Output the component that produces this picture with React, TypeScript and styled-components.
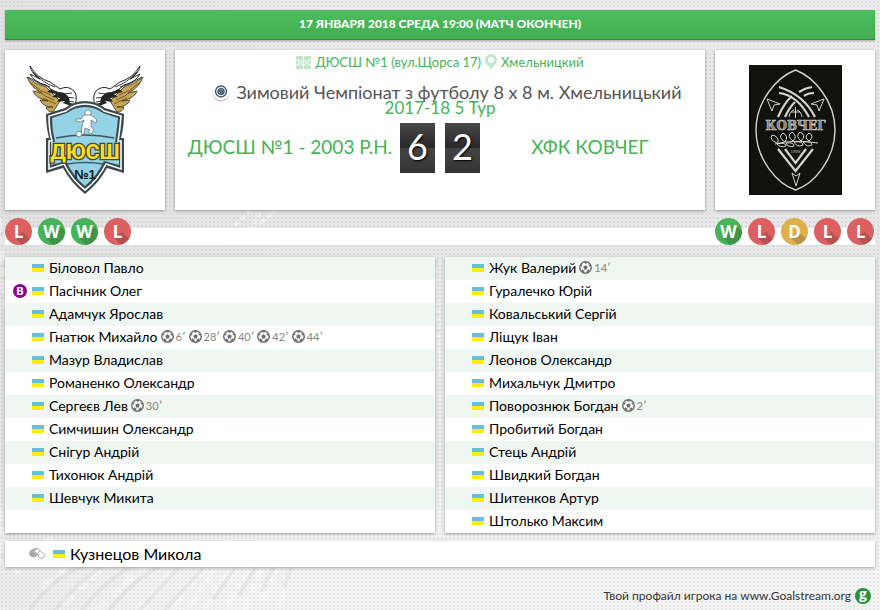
import React from "react";
import styled, { createGlobalStyle } from "styled-components";

const streaks = `<svg xmlns='http://www.w3.org/2000/svg' width='440' height='410' viewBox='0 0 440 410'><g fill='none' stroke='#fafafa' stroke-opacity='.45' stroke-linecap='round'><path stroke-width='9' stroke-dasharray='6 16 2 13' d='M18 370L60 332M45 386L90 345M66 402L120 350M100 408L165 345M140 410L190 350M175 402L220 350'/><path stroke-width='5' stroke-dasharray='10 9 4 8' d='M190 406L230 345M205 408L248 342M228 404L260 350M245 408L272 345M262 400L286 352M280 404L297 350M0 20L5 110M0 310L4 370'/><path stroke-width='4' stroke-dasharray='2 6' d='M236 24L249 12M246 36L262 10M262 22L276 10M436 70L440 180M436 290L438 330'/></g><g fill='none' stroke='#d4d4d4' stroke-opacity='.3' stroke-width='4' stroke-linecap='round'><path d='M30 410Q50 380 82 366M55 410Q80 380 105 364M82 410Q105 380 135 364M110 410Q130 382 160 366M140 410L180 366M165 410L205 366M214 398L236 366M240 394L256 366M262 390L274 366M285 386L292 366'/></g></svg>`;

const GlobalStyle = createGlobalStyle`
  * { box-sizing: border-box; }
  body {
    margin: 0;
    min-height: 100vh;
    color: #111;
    font: 14px/16px Lato, "Open Sans", sans-serif;
    background:
      radial-gradient(circle at 2px 2px, rgba(0, 0, 0, 0.06) 1px, transparent 1px) 0 0 / 4px 4px,
      url("data:image/svg+xml,${encodeURIComponent(streaks).replace(/'/g, "%27")}") 0 200px no-repeat,
      linear-gradient(100deg, rgba(215, 215, 215, 0.4), transparent 35%),
      linear-gradient(#ececec, #e8e8e8 35%, #ebebeb 75%, #f4f4f4 92%);
  }
  a { color: inherit; text-decoration: none; }
  svg { display: block; flex: none; }
`;

const Page = styled.main`
  display: flex;
  flex-direction: column;
  padding: 10px 5px 4px;
`;

const DateBar = styled.header`
  display: flex;
  align-items: center;
  justify-content: center;
  height: 30px;
  padding-bottom: 2px;
  color: #fff;
  font-size: 12px;
  font-weight: 900;
  background: linear-gradient(#4dbd5d, #42ad51);
  border-bottom: 1px solid #2f8f3f;
  box-shadow: 0 1px 2px rgba(0, 0, 0, 0.3);
`;

const Summary = styled.section`
  display: grid;
  grid-template-columns: 160px 1fr 160px;
  gap: 10px;
  margin-top: 10px;
`;

const Card = styled.div`
  background: #fff;
  box-shadow: 0 1px 3px rgba(0, 0, 0, 0.35);
`;

const CrestCard = styled(Card)`
  display: flex;
  align-items: center;
  justify-content: center;
  height: 160px;
`;

const MatchCard = styled(Card)`
  padding: 4px 10px 0;
  text-align: center;
`;

const Venue = styled.div`
  display: flex;
  align-items: center;
  justify-content: center;
  gap: 4px;
  color: #45b455;
  font-size: 13px;
`;

const Tournament = styled.h1`
  display: flex;
  align-items: center;
  justify-content: center;
  gap: 6px;
  height: 16px;
  margin: 14px 0 0;
  padding-left: 14px;
  color: #555;
  font-size: 18px;
  font-weight: 400;
  line-height: 16px;
`;

const Round = styled.div`
  color: #45b455;
  font-size: 17px;
`;

const ScoreLine = styled.div`
  display: grid;
  grid-template-columns: 1fr auto 1fr;
  align-items: center;
  margin-top: 7px;
`;

const Team = styled.a`
  padding-bottom: 2px;
  font-size: 19px;
  line-height: 24px;
  && { color: #45b455; }
`;

const Score = styled.div`
  display: flex;
  gap: 10px;
  padding: 0 5px;
`;

const Digit = styled.span`
  width: 35px;
  height: 50px;
  color: #fff;
  font-size: 36px;
  line-height: 46px;
  text-shadow: 1px 1px 2px #000;
  background: linear-gradient(#484848, #282828 50%, #444 50%, #343434);
`;

const FormStrip = styled.section`
  display: flex;
  justify-content: space-between;
  margin-top: 8px;
  padding-right: 1px;
  background: linear-gradient(transparent 10px, #fff 10px);
  box-shadow: 0 1px 0 #ddd;
`;

const FormGroup = styled.div`
  display: flex;
  gap: 6px;
`;

const Lineups = styled.section`
  display: grid;
  grid-template-columns: 1fr 1fr;
  gap: 10px;
  margin-top: 12px;
`;

const Squad = styled(Card).attrs({ as: "ul" })`
  margin: 0;
  padding: 0;
  list-style: none;
`;

const Player = styled.li`
  display: flex;
  align-items: center;
  height: 23px;
  padding: 0 0 2px 7px;
  &:nth-child(odd) { background: #f0f6f2; }
`;

const Role = styled.span`
  display: flex;
  width: 20px;
`;

const Keeper = styled.span`
  width: 14px;
  height: 14px;
  margin-left: 1px;
  border-radius: 50%;
  color: #fff;
  font: 900 11px/14px Lato, sans-serif;
  text-align: center;
  background: #85078e;
`;

const Flag = styled.span`
  width: 12px;
  height: 8px;
  margin-right: 5px;
  background: linear-gradient(#65bfd8 50%, #ffee0a 50%);
`;

const PlayerName = styled.a`
  && { color: #000; }
`;

const Goal = styled.span`
  display: flex;
  align-items: center;
  gap: 2px;
  margin-left: 3px;
  color: #858585;
  font-size: 11px;
`;

const Coach = styled(Card)`
  display: flex;
  align-items: center;
  height: 26px;
  margin-top: 8px;
  padding-left: 24px;
  font-size: 16px;
`;

const CoachIcon = styled.svg`
  margin-right: 7px;
`;

const Footer = styled.footer`
  display: flex;
  justify-content: flex-end;
  margin-top: 21px;
  font-size: 12px;
`;

const SiteLink = styled.a`
  display: flex;
  align-items: center;
  gap: 4px;
  padding-right: 4px;
  && { color: #333; }
`;

const formColors: Record<string, [string, string]> = {
  W: ["#45b356", "#3c9549"],
  L: ["#dc6060", "#b94f50"],
  D: ["#dfb04e", "#ba9445"],
};

function FormBadge({ result, id }: { result: string; id: string }) {
  const [base, shade] = formColors[result];
  const shadow = result === "W" ? "M7 19L23 9L36 22V36H24Z" : "M9 19L18 14L36 32V36H26Z";
  return (
    <svg width="27" height="27" viewBox="0 0 27 27">
      <clipPath id={id}><circle cx="13.5" cy="13.5" r="13.5" /></clipPath>
      <g clipPath={`url(#${id})`}>
        <path fill={base} d="M0 0H27V27H0Z" />
        <path fill={shade} d={shadow} />
      </g>
      <text x="13.5" y="20" textAnchor="middle" fill="#fff" fontFamily="Open Sans" fontWeight="700" fontSize="17">{result}</text>
    </svg>
  );
}

function Ball() {
  return (
    <svg width="13" height="13" viewBox="0 0 26 26">
      <circle cx="13" cy="13" r="11.5" fill="#fff" stroke="#6e6e6e" strokeWidth="3" />
      <path fill="#6e6e6e" d="M13 8.5l4.5 3.2-1.7 5.3h-5.6l-1.7-5.3ZM8 3l5 2.5L18 3l-5-2ZM2 10l4 1 1-5-4 3ZM24 10l-4 1-1-5 4 3ZM5 21l1-5 5 4-1 4ZM21 21l-1-5-5 4 1 4Z" />
    </svg>
  );
}

function WingHalf() {
  return (
    <g strokeLinejoin="round">
      <path fill="#c9a452" stroke="#34332b" strokeWidth=".8" d="M1 12Q10 20 20 22L34 36 27 47Q21 47 20 42L27 42Q17 42 14 35L22 36Q9 33 7 26L16 28Q5 23 1 12Z" />
      <path fill="none" stroke="#68532d" strokeWidth=".9" d="M5 18Q14 27 25 30M11 25Q19 32 28 35M17 33L30 39" />
      <path fill="#232625" d="M18 17L33 24Q43 27 46 33L45 41 37 38 39 36 31 37 34 33 26 32 30 29 21 27 25 24Z" />
      <path fill="#fff" stroke="#242424" strokeWidth="1" d="M4 1Q11 13 24 17L34 24Q42 20 48 26Q52 31 49 40L43 38Q44 31 37 28Q28 28 20 20Q8 17 4 9L14 14Q5 8 4 1Z" />
      <path fill="none" stroke="#242424" strokeWidth=".9" d="M7 7Q17 18 29 22M2 12Q14 20 24 22M38 29L46 28M40 32L48 33M41 36L48 37" />
    </g>
  );
}

function SchoolCrest() {
  return (
    <svg width="118" height="130" viewBox="0 0 118 130" role="img" aria-label="ДЮСШ №1">
      <WingHalf />
      <g transform="matrix(-1 0 0 1 118 0)"><WingHalf /></g>
      <path fill="#3b494d" d="M59 36Q70 36 79 43L98 49Q98 62 95 73H98V108L81 103Q73 118 59 129Q45 118 37 103L20 108V73H23Q20 62 20 49L39 43Q48 36 59 36Z" />
      <path fill="none" stroke="#fff" strokeWidth="1.6" d="M59 39Q70 39 78 46L95 51Q94 65 92 76H95V104L80 99Q72 115 59 125Q46 115 38 99L23 104V76H26Q23 65 23 51L40 46Q48 39 59 39Z" />
      <path fill="#93d3e5" d="M59 42Q69 42 77 48L92 53Q91 65 89 77H93V100L78 96Q71 111 59 121Q47 111 40 96L25 100V77H29Q26 65 26 53L41 48Q49 42 59 42Z" />
      <path fill="none" stroke="#40525a" strokeWidth="1.5" d="M30 73Q59 67 88 73M41 99Q59 96 78 99" />
      <circle cx="62" cy="48" r="3.2" fill="#fff" stroke="#566c74" strokeWidth=".7" />
      <path fill="#fff" stroke="#566c74" strokeWidth=".7" d="M58 50L65 50L71 55 70 58 65 55 65 61 68 65 65 69 62 67 64 65 59 63 58 69 55 70 56 61 58 55 54 57 50 56 50 54 55 54Z" />
      <circle cx="53" cy="69" r="2.8" fill="#fff" stroke="#566c74" strokeWidth=".7" />
      <text x="59" y="94" textAnchor="middle" fontFamily="Roboto" fontSize="21" fontWeight="700" fill="#f6df23" stroke="#454532" strokeWidth="2.6" paintOrder="stroke">ДЮСШ</text>
      <text x="59" y="114" textAnchor="middle" fontFamily="Liberation Sans" fontSize="13" fontWeight="700" fill="#11191b">№1</text>
    </svg>
  );
}

function ArkCrest() {
  return (
    <svg width="93" height="130" viewBox="0 0 93 130" role="img" aria-label="КОВЧЕГ">
      <path fill="#11110d" d="M0 0H93V130H0Z" />
      <g fill="none" stroke="#d5d5d0">
        <path strokeWidth="1.4" d="M46.500 5C65 12 86 36 86 65C86 94 65 119 46.500 125C28 119 7 94 7 65C7 36 28 12 46.500 5Z" />
        <path strokeWidth="2.2" d="M30 28Q48 30 60 52M30 22Q55 30 66 52M63 22Q56 23 50 27M65 28Q59 28 55 31M43 31Q35 38 29 52M46 37Q40 43 36 52M29 84L46.500 106 64 84M36 84L46.500 98 57 84" />
        <path strokeWidth="1" d="M46.500 42V53M40 52Q41 46 45 45M53 52Q52 46 48 45M42 47H51M18 34L31 39 25 40 23 46ZM75 34L62 39 68 40 70 46ZM43 108L47 111 51 108 47 121Z" />
        <path strokeWidth="1" d="M26 79Q45 74 69 78M28 78Q20 75 23 70Q30 71 29 78M36 77Q28 72 34 68Q40 71 36 77M44 76Q37 71 43 67Q49 71 44 76M52 76Q46 71 51 67Q58 70 52 76M60 76Q54 72 60 68Q66 71 60 76M28 79Q31 83 37 81Q37 77 28 79M37 78Q39 83 45 81Q45 77 37 78M45 77Q48 83 54 80Q54 76 45 77M54 77Q58 83 63 80Q63 76 54 77" />
      </g>
      <text x="46.500" y="65" textAnchor="middle" fontFamily="DejaVu Serif" fontSize="12" fontWeight="700" fill="#77776f" stroke="#d5d5d0" strokeWidth=".6">КОВЧЕГ</text>
      <text x="46.500" y="88" textAnchor="middle" fontFamily="Liberation Serif" fontSize="5" fill="#c5c5bf">1998</text>
    </svg>
  );
}

function PitchIcon() {
  return (
    <svg width="15" height="13" viewBox="0 0 15 13">
      <path fill="#c5e5c9" d="M0 0H15V13H0Z" />
      <path fill="none" stroke="#fff" d="M7.500 0V13M0 4H3V9H0M15 4H12V9H15" />
      <circle cx="7.500" cy="6.500" r="2.500" fill="none" stroke="#fff" />
    </svg>
  );
}

function PinIcon() {
  return (
    <svg width="12" height="16" viewBox="0 0 12 16">
      <path fill="#c5e5c9" fillRule="evenodd" d="M6 0a6 6 0 0 1 6 6c0 4-4 6-6 10C4 12 0 10 0 6a6 6 0 0 1 6-6Zm0 3a3 3 0 1 0 0 6 3 3 0 0 0 0-6Z" />
    </svg>
  );
}

function LeagueIcon() {
  return (
    <svg width="18" height="19" viewBox="0 0 18 19">
      <circle cx="9" cy="10" r="8.500" fill="#999" opacity=".6" />
      <circle cx="9" cy="9" r="8.300" fill="#fff" />
      <circle cx="9" cy="8.500" r="5.500" fill="#e2e8ec" stroke="#3d5269" strokeWidth="1.300" />
      <circle cx="9" cy="8.500" r="3" fill="#8395a5" stroke="#3d5269" strokeWidth="1.200" />
      <path fill="none" stroke="#3d5269" d="M7 8L9 7 11 9 9 10Z" />
    </svg>
  );
}

function WhistleIcon() {
  return (
    <CoachIcon width="17" height="12" viewBox="0 0 17 12">
      <path fill="#fff" stroke="#a7a7a7" d="M4 1L9 .5 16 7.500 13 11 9 8" />
      <path fill="#aaa" d="M4 1C-1 2-1 8 3 9C7 10 9 8 9 5L5 4 8 1Z" />
      <path fill="none" stroke="#aaa" d="M9 5L11 3M9 8L10 6" />
    </CoachIcon>
  );
}

function SiteLogo() {
  return (
    <svg width="16" height="16" viewBox="0 0 16 16">
      <circle cx="8" cy="8" r="8" fill="#27913d" />
      <text x="8" y="11" textAnchor="middle" fontFamily="Open Sans" fontWeight="700" fontSize="14" fill="#fff">g</text>
    </svg>
  );
}

type PlayerData = { name: string; goals?: number[]; keeper?: boolean };

const home: PlayerData[] = [
  { name: "Біловол Павло" },
  { name: "Пасічник Олег", keeper: true },
  { name: "Адамчук Ярослав" },
  { name: "Гнатюк Михайло", goals: [6, 28, 40, 42, 44] },
  { name: "Мазур Владислав" },
  { name: "Романенко Олександр" },
  { name: "Сергеєв Лев", goals: [30] },
  { name: "Симчишин Олександр" },
  { name: "Снігур Андрій" },
  { name: "Тихонюк Андрій" },
  { name: "Шевчук Микита" },
];

const away: PlayerData[] = [
  { name: "Жук Валерий", goals: [14] },
  { name: "Гуралечко Юрій" },
  { name: "Ковальський Сергій" },
  { name: "Ліщук Іван" },
  { name: "Леонов Олександр" },
  { name: "Михальчук Дмитро" },
  { name: "Поворознюк Богдан", goals: [2] },
  { name: "Пробитий Богдан" },
  { name: "Стець Андрій" },
  { name: "Швидкий Богдан" },
  { name: "Шитенков Артур" },
  { name: "Штолько Максим" },
];

function SquadList({ players }: { players: PlayerData[] }) {
  return (
    <Squad>
      {players.map((p) => (
        <Player key={p.name}>
          <Role>{p.keeper && <Keeper>В</Keeper>}</Role>
          <Flag />
          <PlayerName href="#">{p.name}</PlayerName>
          {p.goals?.map((minute) => (
            <Goal key={minute}><Ball />{minute}′</Goal>
          ))}
        </Player>
      ))}
    </Squad>
  );
}

export default function App() {
  return (
    <>
      <GlobalStyle />
      <Page>
        <DateBar>17 ЯНВАРЯ 2018 СРЕДА 19:00 (МАТЧ ОКОНЧЕН)</DateBar>
        <Summary>
          <CrestCard><SchoolCrest /></CrestCard>
          <MatchCard>
            <Venue>
              <PitchIcon /><a href="#">ДЮСШ №1 (вул.Щорса 17)</a>
              <PinIcon /><a href="#">Хмельницкий</a>
            </Venue>
            <Tournament><LeagueIcon />Зимовий Чемпіонат з футболу 8 х 8 м. Хмельницький</Tournament>
            <Round>2017-18 5 Тур</Round>
            <ScoreLine>
              <Team href="#">ДЮСШ №1 - 2003 Р.Н.</Team>
              <Score><Digit>6</Digit><Digit>2</Digit></Score>
              <Team href="#">ХФК КОВЧЕГ</Team>
            </ScoreLine>
          </MatchCard>
          <CrestCard><ArkCrest /></CrestCard>
        </Summary>
        <FormStrip>
          <FormGroup>{["L", "W", "W", "L"].map((r, i) => <FormBadge key={i} id={`home${i}`} result={r} />)}</FormGroup>
          <FormGroup>{["W", "L", "D", "L", "L"].map((r, i) => <FormBadge key={i} id={`away${i}`} result={r} />)}</FormGroup>
        </FormStrip>
        <Lineups>
          <SquadList players={home} />
          <SquadList players={away} />
        </Lineups>
        <Coach><WhistleIcon /><Flag /><PlayerName href="#">Кузнецов Микола</PlayerName></Coach>
        <Footer><SiteLink href="#">Твой профайл игрока на www.Goalstream.org<SiteLogo /></SiteLink></Footer>
      </Page>
    </>
  );
}
